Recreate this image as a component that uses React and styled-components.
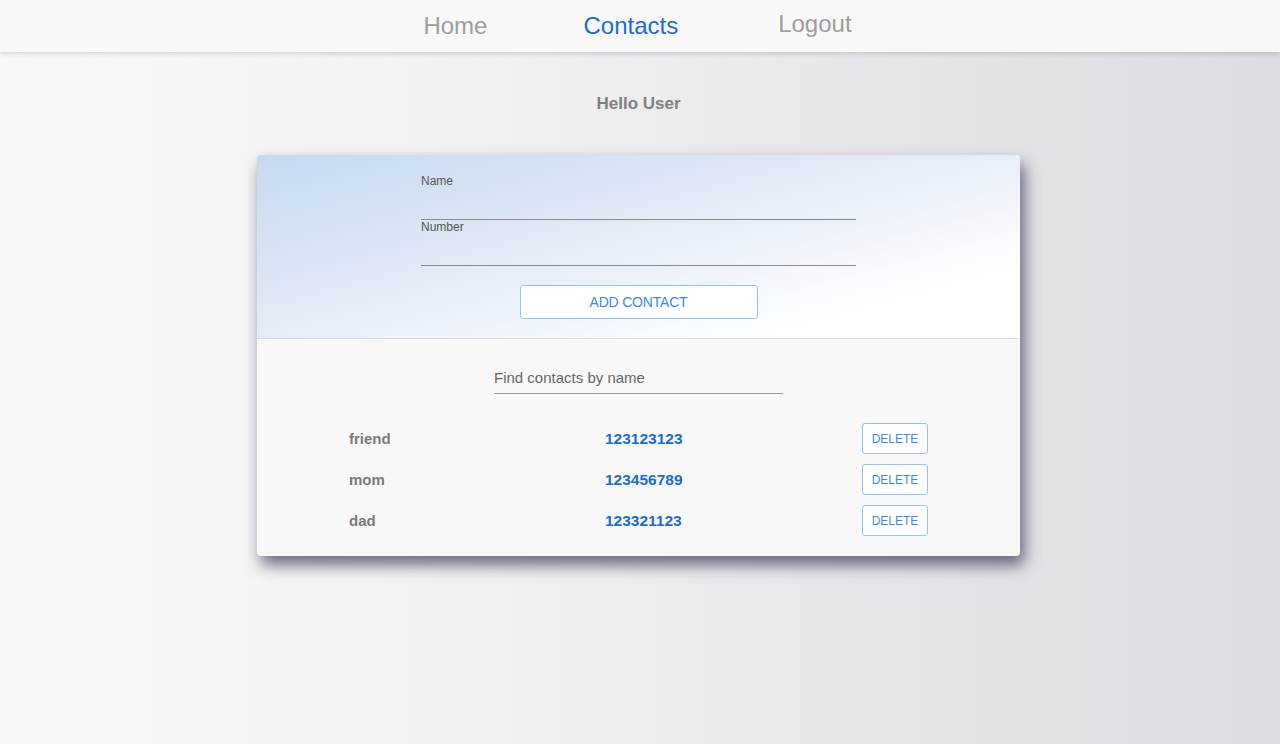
import styled, { createGlobalStyle } from "styled-components"

const GlobalStyle = createGlobalStyle`
    html, body {
        margin: 0;
        padding: 0;
    }
    body {
        font-family: "Liberation Sans", Arial, sans-serif;
        background: linear-gradient(90deg, #f8f8f8 0%, #f3f3f4 30%, #e9e9ed 60%, #dcdce2 100%);
        min-height: 744px;
    }
`

const Page = styled.div`
    min-height: 744px;
`

const Header = styled.header`
    background-color: #f8f8f8;
    box-shadow: 0 2px 4px rgba(0, 0, 0, 0.14);
    display: flex;
    justify-content: center;
    align-items: center;
    gap: 96px;
    height: 52px;
    padding-right: 5px;
`

const NavLink = styled.a`
    color: ${props => props.$active ? "#1b6cd1" : "#9e9e9e"};
    font-size: 24px;
    text-decoration: none;
    cursor: pointer;
`

const LogoutBtn = styled.button`
    background: none;
    border: none;
    color: #9e9e9e;
    font-family: inherit;
    font-size: 24px;
    padding: 0 0 4px 4px;
    cursor: pointer;
`

const Main = styled.main`
    padding-right: 3px;
`

const Greeting = styled.h2`
    color: #808080;
    font-size: 17px;
    font-weight: bold;
    text-align: center;
    margin: 42px 0 41px;
    line-height: 20px;
`

const Card = styled.div`
    width: 763px;
    margin: 0 auto;
    border-radius: 4px;
    overflow: hidden;
    background-color: #f8f8f8;
    box-shadow: 4px 9px 16px rgba(40, 40, 70, 0.68);
`

const FormSection = styled.form`
    background: linear-gradient(165deg, #c7d9f0 0%, #dde7f5 35%, #eef3fa 60%, #ffffff 82%);
    border-bottom: 1px solid #dcdcdc;
    display: flex;
    flex-direction: column;
    align-items: center;
    padding: 19px 0 19px;
`

const Field = styled.label`
    display: flex;
    flex-direction: column;
    width: 435px;
`

const Label = styled.span`
    color: #555;
    font-size: 12px;
    line-height: 14px;
`

const Input = styled.input`
    background: transparent;
    border: none;
    border-bottom: 1px solid #8a8a8a;
    height: 31px;
    padding: 0;
    font-family: inherit;
    font-size: 15px;
    outline: none;
`

const AddButton = styled.button`
    margin-top: 19px;
    width: 238px;
    height: 34px;
    background-color: #fff;
    border: 1px solid #95c0ee;
    border-radius: 3px;
    color: #3d88e0;
    font-family: inherit;
    font-size: 14px;
    letter-spacing: -0.2px;
    cursor: pointer;
`

const ListSection = styled.div`
    display: flex;
    flex-direction: column;
    align-items: center;
    padding: 22px 0 20px;
`

const Filter = styled.input`
    width: 289px;
    height: 31px;
    background: transparent;
    border: none;
    border-bottom: 1px solid #999;
    padding: 1px 0 0;
    font-family: inherit;
    font-size: 15px;
    color: #555;
    outline: none;
    &::placeholder {
        color: #666;
    }
`

const List = styled.ul`
    list-style: none;
    margin: 29px 0 0;
    padding: 0;
    display: flex;
    flex-direction: column;
    gap: 10px;
`

const Row = styled.li`
    display: grid;
    grid-template-columns: 256px 257px 66px;
    align-items: center;
    width: 579px;
`

const Name = styled.span`
    color: #7a7a7a;
    font-size: 15px;
    font-weight: bold;
`

const Number = styled.span`
    color: #1b6bd0;
    font-size: 15.5px;
    font-weight: bold;
`

const DeleteButton = styled.button`
    width: 66px;
    height: 31px;
    background-color: #fff;
    border: 1px solid #95c0ee;
    border-radius: 3px;
    color: #3d88e0;
    font-family: inherit;
    font-size: 12px;
    padding: 0;
    cursor: pointer;
`

const contacts = [
    { id: 1, name: "friend", number: "123123123" },
    { id: 2, name: "mom", number: "123456789" },
    { id: 3, name: "dad", number: "123321123" },
]

export default function App() {
    return (
        <Page>
            <GlobalStyle />
            <Header>
                <NavLink>Home</NavLink>
                <NavLink $active>Contacts</NavLink>
                <LogoutBtn>Logout</LogoutBtn>
            </Header>
            <Main>
                <Greeting>Hello User</Greeting>
                <Card>
                    <FormSection onSubmit={e => e.preventDefault()}>
                        <Field>
                            <Label>Name</Label>
                            <Input type="text" name="name" />
                        </Field>
                        <Field>
                            <Label>Number</Label>
                            <Input type="tel" name="number" />
                        </Field>
                        <AddButton type="submit">ADD CONTACT</AddButton>
                    </FormSection>
                    <ListSection>
                        <Filter placeholder="Find contacts by name" />
                        <List>
                            {contacts.map(c => (
                                <Row key={c.id}>
                                    <Name>{c.name}</Name>
                                    <Number>{c.number}</Number>
                                    <DeleteButton>DELETE</DeleteButton>
                                </Row>
                            ))}
                        </List>
                    </ListSection>
                </Card>
            </Main>
        </Page>
    )
}
